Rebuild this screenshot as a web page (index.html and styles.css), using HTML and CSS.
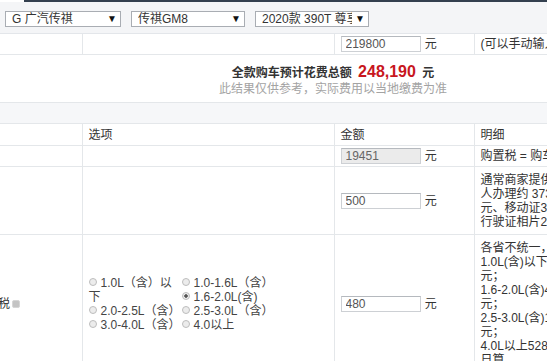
FILE: index.html
```html
<!DOCTYPE html>
<html lang="zh-CN">
<head>
  <meta charset="UTF-8" />
  <title>购车计算器</title>
  <link rel="stylesheet" href="styles.css">
</head>
<body>
  <div class="topbar"></div>

  <div class="pickers">
    <div class="sel sel-brand"><span class="sel-text">G 广汽传祺</span><span class="arrow">▼</span></div>
    <div class="sel"><span class="sel-text">传祺GM8</span><span class="arrow">▼</span></div>
    <div class="sel"><span class="sel-text">2020款 390T 尊享版</span><span class="arrow">▼</span></div>
  </div>

  <div class="page">
    <table class="calc">
      <colgroup>
        <col class="c-name"><col class="c-opt"><col class="c-amount"><col class="c-detail">
      </colgroup>
      <tr class="row-price">
        <td></td>
        <td></td>
        <td><input class="amount" value="219800"> <span class="unit">元</span></td>
        <td class="detail">(可以手动输入价格)</td>
      </tr>
    </table>

    <div class="total">
      <div class="total-line">
        全款购车预计花费总额 <span class="total-num">248,190</span> 元
      </div>
      <div class="total-note">此结果仅供参考，实际费用以当地缴费为准</div>
    </div>

    <div class="band"></div>

    <table class="calc">
      <colgroup>
        <col class="c-name"><col class="c-opt"><col class="c-amount"><col class="c-detail">
      </colgroup>
      <tr class="head">
        <td></td>
        <td>选项</td>
        <td>金额</td>
        <td>明细</td>
      </tr>
      <tr>
        <td class="name">购置税</td>
        <td></td>
        <td><input class="amount readonly" value="19451" readonly> <span class="unit">元</span></td>
        <td class="detail">购置税 = 购车价/(1+13%)×10%</td>
      </tr>
      <tr>
        <td class="name">上牌费用</td>
        <td></td>
        <td><input class="amount" value="500"> <span class="unit">元</span></td>
        <td class="detail multi">
          通常商家提供一条龙服务，个<br>
          人办理约 373元，其中牌照费100<br>
          元、移动证30元、拓印费20元、<br>
          行驶证相片20元。
        </td>
      </tr>
      <tr>
        <td class="name">车船使用税<span class="help"></span></td>
        <td>
          <div class="options">
            <label class="opt tall"><span class="dot"></span>1.0L（含）以下</label>
            <label class="opt"><span class="dot"></span>1.0-1.6L（含）</label>
            <label class="opt"><span class="dot on"></span>1.6-2.0L(含)</label>
            <label class="opt"><span class="dot"></span>2.0-2.5L（含）</label>
            <label class="opt"><span class="dot"></span>2.5-3.0L（含）</label>
            <label class="opt"><span class="dot"></span>3.0-4.0L（含）</label>
            <label class="opt"><span class="dot"></span>4.0以上</label>
          </div>
        </td>
        <td><input class="amount" value="480"> <span class="unit">元</span></td>
        <td class="detail multi">
          各省不统一，以下为参考价格：<br>
          1.0L(含)以下300<br>
          元；<br>
          1.6-2.0L(含)480<br>
          元；<br>
          2.5-3.0L(含)1200<br>
          元；<br>
          4.0L以上5280元，按<br>
          日算
        </td>
      </tr>
    </table>
  </div>
</body>
</html>
```

FILE: styles.css
```css
html, body {
  overflow: hidden;
}

body {
  margin: 0;
  background: #fff;
  color: #333;
  font-family: 'Liberation Sans', 'Noto Sans CJK SC', sans-serif;
  font-size: 12px;
}

.topbar {
  margin-left: 24px;
  height: 2px;
  background: #34404f;
}

.pickers {
  display: flex;
  gap: 10px;
  padding: 9px 5px 6px;
  background: #f4f5f7;
  border-bottom: 1px solid #e3e6ea;
}

.sel {
  display: flex;
  align-items: center;
  width: 114px;
  height: 16px;
  box-sizing: border-box;
  border: 1px solid #a9adb3;
  background: #fff;
  padding: 0 3px 0 6px;
  overflow: hidden;
  white-space: nowrap;
}

.sel-brand {
  width: 116px;
}

.sel-text {
  flex: 1;
  overflow: hidden;
  text-overflow: clip;
  line-height: 14px;
}

.arrow {
  font-size: 10px;
  line-height: 14px;
  color: #111;
  margin-left: 3px;
}

.page {
  margin-left: -100px;
  width: 866px;
}

.calc {
  width: 866px;
  table-layout: fixed;
  border-collapse: collapse;
}

.c-name { width: 182px; }
.c-opt { width: 252px; }
.c-amount { width: 140px; }
.c-detail { width: 292px; }

.calc td {
  border: 1px solid #e4e7ea;
  border-top: 0;
  padding: 2px 6px;
  line-height: 14px;
  vertical-align: middle;
  white-space: nowrap;
  overflow: hidden;
}

.calc td:first-child {
  border-left: 0;
}

.calc .name {
  padding-left: 50px;
}

.calc .head td {
  padding: 4px 6px 3px;
}

.calc .detail {
  padding-left: 6px;
}

.calc .multi {
  padding-top: 6px;
  padding-bottom: 5px;
}

.amount {
  width: 80px;
  height: 16px;
  box-sizing: border-box;
  border: 1px solid #cdd0d4;
  border-top-color: #b5b9be;
  padding: 0 4px;
  font-family: 'Liberation Sans', sans-serif;
  font-size: 12px;
  color: #555;
  vertical-align: middle;
  margin: 0;
}

.amount.readonly {
  background: #ebebeb;
  color: #666;
}

.unit {
  margin-left: 1px;
  vertical-align: middle;
}

.total {
  text-align: center;
  padding: 8px 0 6px;
}

.total-line {
  font-weight: bold;
  line-height: 18px;
}

.total-num {
  color: #c8161d;
  font-size: 16px;
  margin: 0 3px;
}

.total-note {
  color: #a3a3a3;
  line-height: 14px;
}

.band {
  height: 20px;
  background: #f6f7f9;
  border-top: 1px solid #e4e7ea;
  border-bottom: 1px solid #e4e7ea;
}

.options {
  display: grid;
  grid-template-columns: 93px 93px;
  line-height: 14px;
  color: #444;
}

.opt {
  white-space: normal;
}

.opt.tall {
  grid-row: span 2;
}

.dot {
  display: inline-block;
  width: 6px;
  height: 6px;
  border-radius: 50%;
  border: 1px solid #bdbdbd;
  background: #ececec;
  margin-right: 4px;
  vertical-align: 1px;
}

.dot.on {
  background: radial-gradient(circle, #555 0 35%, #ececec 45%);
}

.help {
  display: inline-block;
  width: 6px;
  height: 6px;
  margin-left: 2px;
  border-radius: 2px;
  border: 1px solid #d6d6d6;
  background: #c4c4c4;
  vertical-align: middle;
}
```
